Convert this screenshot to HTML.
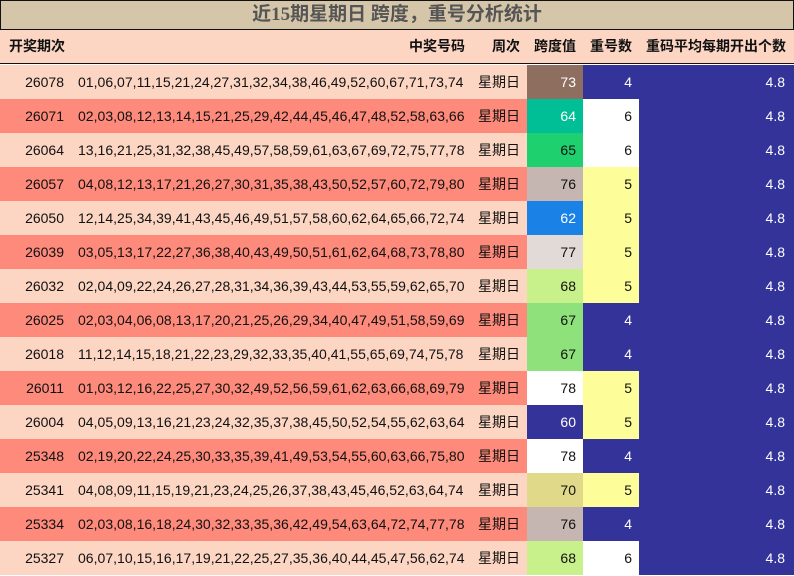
<!DOCTYPE html>
<html><head><meta charset="utf-8"><style>
*{margin:0;padding:0;box-sizing:border-box}
body{width:794px;height:576px;background:#fff;font-family:"Liberation Sans","Noto Sans CJK SC",sans-serif;position:relative;overflow:hidden}
.t{position:absolute;left:0;top:0;width:794px;height:30px;background:#d6c6a9;border:1.5px solid #111;text-align:center;font-size:19px;font-weight:bold;color:#555;line-height:28px;font-family:"Liberation Serif","Noto Sans CJK SC",serif}
.h{position:absolute;left:0;top:30px;width:794px;height:34px;background:#fcd5c3;border-bottom:1.5px solid #111;font-size:14px;font-weight:bold;color:#111}
.h span,.r span{position:absolute;top:0;line-height:33px;white-space:nowrap}
.r{position:absolute;left:0;width:794px;height:34px;font-size:14px;color:#111}
.r span{line-height:34px;height:34px}
.a{background:#fcd5c3}.b{background:#fd8a7b}
</style></head><body>
<div class="t">近15期星期日 跨度，重号分析统计</div>
<div class="h">
<span style="left:9px">开奖期次</span>
<span style="left:409px">中奖号码</span>
<span style="left:492px">周次</span>
<span style="left:534px">跨度值</span>
<span style="left:590px">重号数</span>
<span style="left:646px">重码平均每期开出个数</span>
</div>
<div id="rows"></div>
<script>
var d=[
["26078","01,06,07,11,15,21,24,27,31,32,34,38,46,49,52,60,67,71,73,74","73","#8d6e5f",1,"4"],
["26071","02,03,08,12,13,14,15,21,25,29,42,44,45,46,47,48,52,58,63,66","64","#00bf96",1,"6"],
["26064","13,16,21,25,31,32,38,45,49,57,58,59,61,63,67,69,72,75,77,78","65","#1fd06e",0,"6"],
["26057","04,08,12,13,17,21,26,27,30,31,35,38,43,50,52,57,60,72,79,80","76","#c5b6b1",0,"5"],
["26050","12,14,25,34,39,41,43,45,46,49,51,57,58,60,62,64,65,66,72,74","62","#1a82e6",1,"5"],
["26039","03,05,13,17,22,27,36,38,40,43,49,50,51,61,62,64,68,73,78,80","77","#e2dad6",0,"5"],
["26032","02,04,09,22,24,26,27,28,31,34,36,39,43,44,53,55,59,62,65,70","68","#c9f18b",0,"5"],
["26025","02,03,04,06,08,13,17,20,21,25,26,29,34,40,47,49,51,58,59,69","67","#8fe27b",0,"4"],
["26018","11,12,14,15,18,21,22,23,29,32,33,35,40,41,55,65,69,74,75,78","67","#8fe27b",0,"4"],
["26011","01,03,12,16,22,25,27,30,32,49,52,56,59,61,62,63,66,68,69,79","78","#ffffff",0,"5"],
["26004","04,05,09,13,16,21,23,24,32,35,37,38,45,50,52,54,55,62,63,64","60","#333399",1,"5"],
["25348","02,19,20,22,24,25,30,33,35,39,41,49,53,54,55,60,63,66,75,80","78","#ffffff",0,"4"],
["25341","04,08,09,11,15,19,21,23,24,25,26,37,38,43,45,46,52,63,64,74","70","#e0d98a",0,"5"],
["25334","02,03,08,16,18,24,30,32,33,35,36,42,49,54,63,64,72,74,77,78","76","#c5b6b1",0,"4"],
["25327","06,07,10,15,16,17,19,21,22,25,27,35,36,40,44,45,47,56,62,74","68","#c9f18b",0,"6"]];
var h="";
d.forEach(function(r,i){
var rc=r[5]=="4"?["#333399","#fff"]:r[5]=="5"?["#fdfd99","#111"]:["#ffffff","#111"];
h+='<div class="r '+(i%2?'b':'a')+'" style="top:'+(65+i*34)+'px">'+
'<span style="left:0;width:64px;text-align:right">'+r[0]+'</span>'+
'<span style="left:78px;letter-spacing:0.02px">'+r[1]+'</span>'+
'<span style="left:478px">星期日</span>'+
'<span style="left:527px;width:56px;background:'+r[3]+';color:'+(r[4]?'#fff':'#111')+';text-align:right;padding-right:7px">'+r[2]+'</span>'+
'<span style="left:583px;width:56px;background:'+rc[0]+';color:'+rc[1]+';text-align:right;padding-right:7px">'+r[5]+'</span>'+
'<span style="left:639px;width:155px;background:#333399;color:#fff;text-align:right;padding-right:9px">4.8</span>'+
'</div>';});
document.getElementById("rows").innerHTML=h;
</script>
</body></html>
